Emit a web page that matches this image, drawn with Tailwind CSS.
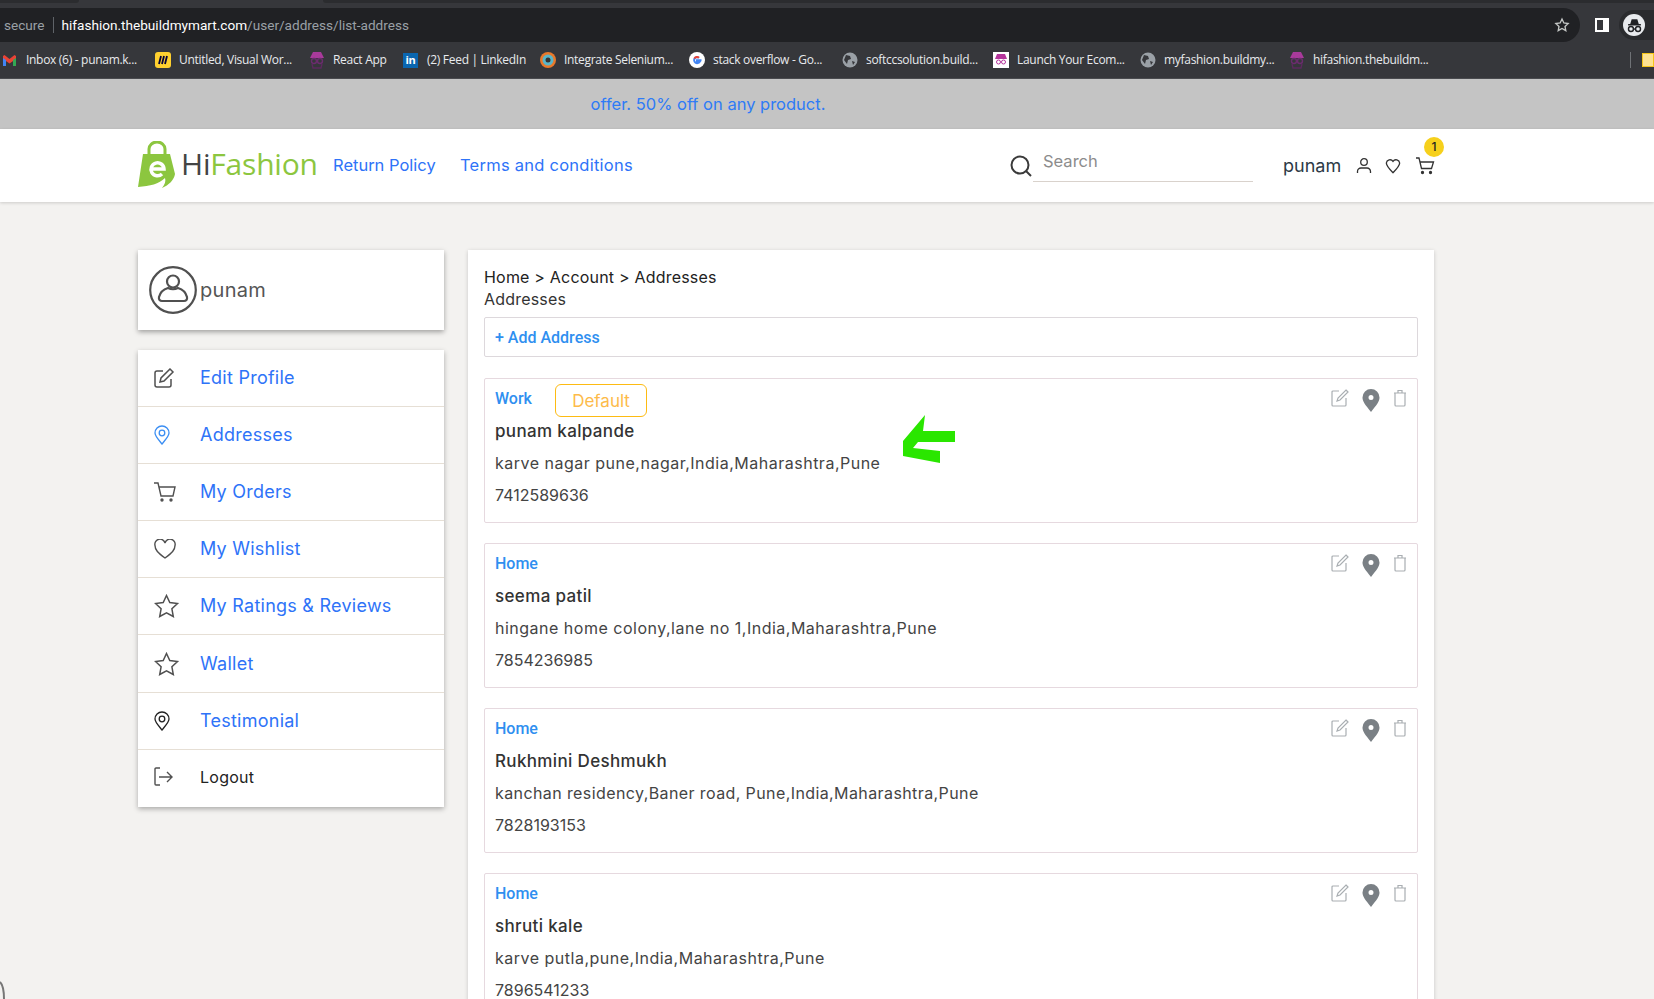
<!DOCTYPE html>
<html lang="en">
<head>
  <meta charset="UTF-8" />
  <title>HiFashion - Addresses</title>
  <script src="https://cdn.jsdelivr.net/npm/@tailwindcss/browser@4"></script>
</head>
<body class="bg-[#f3f2f0]">
<div class="relative h-[999px] w-[1654px] overflow-hidden font-['Inter',sans-serif]">

  <!-- browser chrome -->
  <div class="flex h-[8px] items-start bg-[#36373b]">
    <div class="h-[3px] w-[79px] rounded-br-[3px] bg-[#2b2c2f]"></div>
    <div class="h-[3px] w-[244px]"></div>
    <div class="h-[3px] flex-1 rounded-bl-[3px] bg-[#2b2c2f]"></div>
  </div>
  <div class="flex h-[34px] items-center bg-[#36373b] font-['Roboto',sans-serif] text-[13.600px]">
    <div class="flex h-[34px] w-[1580px] items-center rounded-r-[17px] bg-[#202124] pl-[4px]">
      <span class="text-[#9aa0a6]">secure</span>
      <span class="mx-[8px] h-[16px] w-px bg-[#5f6368]"></span>
      <span class="text-white">hifashion.thebuildmymart.com</span><span class="text-[#9aa0a6]">/user/address/list-address</span>
      <svg class="ml-auto mr-[10px]" width="16" height="16" viewBox="0 0 24 24" fill="none" stroke="#c4c7c5" stroke-width="2"><path d="M12 3l2.800 5.900 6.400.8-4.700 4.400 1.200 6.400-5.700-3.200-5.700 3.200 1.200-6.400L2.800 9.700l6.400-.8z"/></svg>
    </div>
    <div class="ml-[15px] h-[14px] w-[14px] border-2 border-r-[6px] border-white"></div>
    <div class="ml-[10px] flex h-[30px] flex-1 items-center rounded-l-[15px] bg-[#2a2b2e] pl-[4px]">
      <div class="flex h-[22px] w-[22px] items-center justify-center rounded-full bg-[#e8eaed]">
        <svg width="17" height="17" viewBox="0 0 24 24" fill="none" stroke="#202124" stroke-width="2"><path fill="#202124" stroke="none" d="M8 3h8l2 7H6zM3 10h18v2H3z"/><circle cx="7" cy="17" r="3.500"/><circle cx="17" cy="17" r="3.500"/><path d="M10.500 17h3"/></svg>
      </div>
    </div>
  </div>
  <div class="flex h-[37px] items-center border-b border-[#4a4b4f] bg-[#36373b] pl-[3px] font-['Open_Sans',sans-serif] text-[12px] tracking-[-0.3px] text-[#e8eaed]">
    <div class="flex w-[152px] items-center gap-[10px]">
      <svg width="13" height="11" viewBox="0 0 13 11"><path fill="#ea4335" d="M0 1l1.500-1 5 4 5-4 1.500 1v3l-6.500 4.500L0 4z"/><path fill="#4285f4" d="M0 3l3 2v6H0z"/><path fill="#34a853" d="M10 5l3-2v8h-3z"/></svg>
      <span>Inbox (6) - punam.k...</span>
    </div>
    <div class="flex w-[154px] items-center gap-[8px]">
      <svg width="16" height="16" viewBox="0 0 16 16"><rect width="16" height="16" rx="3" fill="#ffd02f"/><path d="M6 4l-2 8M9 4l-2 8M12 4l-2 8" stroke="#050038" stroke-width="1.800"/></svg>
      <span>Untitled, Visual Wor...</span>
    </div>
    <div class="flex w-[94px] items-center gap-[8px]">
      <svg width="16" height="18" viewBox="0 0 16 18"><path fill="#a93a9b" d="M4 1h8l3 6H1z"/><circle cx="5" cy="10" r="2.500" fill="none" stroke="#6b2c6e" stroke-width="1.400"/><circle cx="11" cy="10" r="2.500" fill="none" stroke="#6b2c6e" stroke-width="1.400"/><path fill="none" stroke="#5b2a5e" stroke-width="1.400" d="M3 13l1 4h8l1-4"/></svg>
      <span>React App</span>
    </div>
    <div class="flex w-[137px] items-center gap-[9px]">
      <div class="flex h-[15px] w-[15px] items-center justify-center bg-[#0a66b0] text-[11px] font-bold text-white">in</div>
      <span>(2) Feed | LinkedIn</span>
    </div>
    <div class="flex w-[149px] items-center gap-[8px]">
      <svg width="16" height="16" viewBox="0 0 16 16"><circle cx="8" cy="8" r="8" fill="#e8792b"/><circle cx="8" cy="8" r="5.500" fill="#59b5c8"/><circle cx="8" cy="8" r="2.500" fill="#333"/></svg>
      <span>Integrate Selenium...</span>
    </div>
    <div class="flex w-[153px] items-center gap-[8px]">
      <svg width="16" height="16" viewBox="0 0 16 16"><circle cx="8" cy="8" r="8" fill="#fff"/><path d="M12.500 8.200H8v1.500h2.700A3 3 0 1 1 10 5.800" fill="none" stroke="#4285f4" stroke-width="2"/><path d="M10 5.800a3 3 0 0 0-4.700.8" fill="none" stroke="#ea4335" stroke-width="2"/></svg>
      <span>stack overflow - Go...</span>
    </div>
    <div class="flex w-[151px] items-center gap-[8px]">
      <svg width="16" height="16" viewBox="0 0 16 16"><circle cx="8" cy="8" r="7.500" fill="#9aa0a6"/><path fill="#36373b" d="M4 3l4 1 1 3-3 1-1 4-3-4zM10 9l3 1-2 3z"/></svg>
      <span>softccsolution.build...</span>
    </div>
    <div class="flex w-[147px] items-center gap-[8px]">
      <svg width="16" height="16" viewBox="0 0 16 16"><rect width="16" height="16" fill="#fff"/><path fill="#b5359c" d="M4 2h8l2 5H2z"/><circle cx="5.500" cy="10" r="2" fill="none" stroke="#b5359c"/><circle cx="10.500" cy="10" r="2" fill="none" stroke="#b5359c"/></svg>
      <span>Launch Your Ecom...</span>
    </div>
    <div class="flex w-[149px] items-center gap-[8px]">
      <svg width="16" height="16" viewBox="0 0 16 16"><circle cx="8" cy="8" r="7.500" fill="#9aa0a6"/><path fill="#36373b" d="M4 3l4 1 1 3-3 1-1 4-3-4zM10 9l3 1-2 3z"/></svg>
      <span>myfashion.buildmy...</span>
    </div>
    <div class="flex w-[341px] items-center gap-[8px]">
      <svg width="16" height="18" viewBox="0 0 16 18"><path fill="#a93a9b" d="M4 1h8l3 6H1z"/><circle cx="5" cy="10" r="2.500" fill="none" stroke="#6b2c6e" stroke-width="1.400"/><circle cx="11" cy="10" r="2.500" fill="none" stroke="#6b2c6e" stroke-width="1.400"/><path fill="none" stroke="#5b2a5e" stroke-width="1.400" d="M3 13l1 4h8l1-4"/></svg>
      <span>hifashion.thebuildm...</span>
    </div>
    <div class="h-[16px] w-px bg-[#6f7276]"></div>
    <div class="ml-[11px] h-[14px] w-[12px] border border-[#f5c518] bg-[#fde293]"></div>
  </div>

  <!-- offer banner -->
  <div class="flex h-[50px] w-full items-center bg-[#c4c4c4]">
    <p class="w-[1416px] text-center text-[16.500px] text-[#2e7bf6]">offer. 50% off on any product.</p>
  </div>

  <!-- header -->
  <header class="relative flex h-[73px] items-center bg-white pl-[138px] shadow-[0_1px_3px_rgba(0,0,0,0.16)]">
    <div class="flex w-[195px] items-center">
      <svg width="38" height="48" viewBox="0 0 38 48" class="-mt-[2px]">
        <path d="M11 13V8a8 7 0 0 1 16 0v8" fill="none" stroke="#8cc63f" stroke-width="3"/>
        <path fill="#8cc63f" d="M5 13h27l5 20c-1 6-6 11-13 14 3-4 4-7 3-10-6 6-15 8-27 9z"/>
        <circle cx="20" cy="28" r="9.500" fill="#8cc63f"/>
        <path d="M13 28h13a6.500 6.500 0 1 0-2 5" fill="none" stroke="#fff" stroke-width="3.500"/>
      </svg>
      <span class="-mt-[4px] ml-[5px] font-['Open_Sans',sans-serif] text-[30px] leading-none tracking-[-0.2px] text-[#8cc63f]"><span class="text-[#444]">Hi</span>Fashion</span>
    </div>
    <a class="w-[127px] text-[16.500px] text-[#2e73f8]">Return Policy</a>
    <a class="w-[550px] text-[16.500px] tracking-[0.25px] text-[#2e73f8]">Terms and conditions</a>
    <svg width="22" height="22" viewBox="0 0 22 22" fill="none" stroke="#3a3a3a" stroke-width="2"><circle cx="10" cy="10" r="8.500"/><path d="M16 16l5 5"/></svg>
    <div class="ml-[1px] mt-[-7px] flex h-[40px] w-[220px] items-center border-b border-[#d9d2cc] pl-[10px] text-[16.500px] text-[#8c8c8c]">Search</div>
    <span class="ml-[30px] w-[73px] text-[18px] text-[#2d3a46]">punam</span>
    <svg width="16" height="18" viewBox="0 0 16 18" fill="none" stroke="#333" stroke-width="1.300"><circle cx="8" cy="5" r="3.300"/><path d="M1.500 16v-1.500a3.500 3.500 0 0 1 3.500-3.500h6a3.500 3.500 0 0 1 3.500 3.500V16"/></svg>
    <svg class="ml-[13px]" width="16" height="16" viewBox="0 0 24 24" fill="none" stroke="#333" stroke-width="2"><path d="M12 22C6 16 2 12 2 7.500A5.500 5.500 0 0 1 12 5a5.500 5.500 0 0 1 10 2.500C22 12 18 16 12 22z"/></svg>
    <svg class="ml-[14px]" width="20" height="18" viewBox="0 0 20 18" fill="none" stroke="#333" stroke-width="1.300"><path d="M1 1h3l2.500 10.500h10L18.500 5H5"/><circle cx="7.500" cy="15.500" r="1" fill="#333"/><circle cx="15.500" cy="15.500" r="1" fill="#333"/></svg>
    <div class="absolute left-[1424px] top-[8px] flex h-[20px] w-[20px] items-center justify-center rounded-full bg-[#f6d01c] text-[12px] font-medium text-[#222]">1</div>
  </header>

  <!-- page content -->
  <main class="flex items-start gap-[24px] pl-[138px] pt-[48px]">

    <!-- sidebar -->
    <aside class="flex w-[306px] flex-col gap-[20px]">
      <div class="flex h-[80px] items-center bg-white pl-[11px] shadow-[0_2px_5px_rgba(0,0,0,0.35)]">
        <svg width="48" height="48" viewBox="0 0 48 48" fill="none" stroke="#505050" stroke-width="2.200"><circle cx="24" cy="24" r="22.800"/><circle cx="24" cy="15.500" r="6"/><path d="M19 22c-5 1.500-8 5-9 9-.5 2.500 1 4 3 4h22c2 0 3.500-1.500 3-4-1-4-4-7.500-9-9-3 1.500-7 1.500-10 0z"/></svg>
        <span class="ml-[3px] text-[20px] tracking-[0.3px] text-[#555]">punam</span>
      </div>

      <nav class="bg-white text-[18px] tracking-[0.25px] text-[#2e73f8] shadow-[0_2px_5px_rgba(0,0,0,0.3)]">
        <a class="flex h-[57px] items-center border-b border-[#e6dfd5] pb-[1px] pl-[16px]">
          <svg class="w-[46px]" width="46" height="20" viewBox="0 0 46 20" fill="none" stroke="#505050" stroke-width="1.500"><path d="M9 3H3a2 2 0 0 0-2 2v12a2 2 0 0 0 2 2h12a2 2 0 0 0 2-2v-6"/><path d="M16 1l3 3-9 9-4 1 1-4z"/></svg>
          Edit Profile
        </a>
        <a class="flex h-[57px] items-center border-b border-[#e6dfd5] pb-[1px] pl-[16px]">
          <svg class="w-[46px]" width="46" height="20" viewBox="0 0 46 20" fill="none" stroke="#3b8ef3" stroke-width="1.300"><path d="M8 19C4 14 1 11 1 8a7 7 0 0 1 14 0c0 3-3 6-7 11z"/><circle cx="8" cy="8" r="2.800"/></svg>
          Addresses
        </a>
        <a class="flex h-[57px] items-center border-b border-[#e6dfd5] pb-[1px] pl-[16px]">
          <svg class="w-[46px]" width="46" height="20" viewBox="0 0 46 20" fill="none" stroke="#505050" stroke-width="1.400"><path d="M0 1h4l3 13h12l2-9H5"/><circle cx="8" cy="18" r="1" fill="#505050"/><circle cx="17" cy="18" r="1" fill="#505050"/></svg>
          My Orders
        </a>
        <a class="flex h-[57px] items-center border-b border-[#e6dfd5] pb-[1px] pl-[16px]">
          <svg class="w-[46px]" width="46" height="20" viewBox="0 0 46 20" fill="none" stroke="#505050" stroke-width="1.400"><path d="M11 19C4 14 1 11 1 6.500A5 5 0 0 1 11 4a5 5 0 0 1 10 2.500C21 11 18 14 11 19z"/></svg>
          My Wishlist
        </a>
        <a class="flex h-[57px] items-center border-b border-[#e6dfd5] pb-[1px] pl-[16px]">
          <svg class="w-[46px]" width="46" height="24" viewBox="0 0 46 24" fill="none" stroke="#505050" stroke-width="1.500"><path d="M12.500 1.500l3.300 7 7.700 1-5.600 5.300 1.400 7.700-6.800-3.700-6.800 3.700 1.400-7.700L1.500 9.500l7.700-1z"/></svg>
          My Ratings &amp; Reviews
        </a>
        <a class="flex h-[58px] items-center border-b border-[#e6dfd5] pl-[16px]">
          <svg class="w-[46px]" width="46" height="24" viewBox="0 0 46 24" fill="none" stroke="#505050" stroke-width="1.500"><path d="M12.500 1.500l3.300 7 7.700 1-5.600 5.300 1.400 7.700-6.800-3.700-6.800 3.700 1.400-7.700L1.500 9.500l7.700-1z"/></svg>
          Wallet
        </a>
        <a class="flex h-[57px] items-center border-b border-[#e6dfd5] pb-[1px] pl-[16px]">
          <svg class="w-[46px]" width="46" height="20" viewBox="0 0 46 20" fill="none" stroke="#222" stroke-width="1.300"><path d="M8 19C4 14 1 11 1 8a7 7 0 0 1 14 0c0 3-3 6-7 11z"/><circle cx="8" cy="8" r="2.800"/></svg>
          Testimonial
        </a>
        <a class="flex h-[57px] items-center pb-[3px] pl-[16px] text-[16px] text-[#222]">
          <svg class="w-[46px]" width="46" height="20" viewBox="0 0 46 20" fill="none" stroke="#505050" stroke-width="1.400"><path d="M6 1H2a1 1 0 0 0-1 1v15a1 1 0 0 0 1 1h4"/><path d="M5 10h13M13 5l5 5-5 5"/></svg>
          Logout
        </a>
      </nav>
    </aside>

    <!-- addresses -->
    <section class="w-[966px] bg-white px-[16px] pt-[16px] shadow-[0_1px_4px_rgba(0,0,0,0.18)]">
      <p class="h-[22px] text-[16px] leading-[22px] tracking-[0.2px] text-[#222]">Home &gt; Account &gt; Addresses</p>
      <h2 class="h-[22px] text-[16px] font-normal leading-[22px] tracking-[0.2px] text-[#333]">Addresses</h2>
      <div class="mt-[7px] flex h-[40px] items-center rounded-[2px] border border-[#ddd8dc] pl-[10px] pt-[2px] font-['Roboto',sans-serif] text-[16px] font-medium text-[#2f8ff0]">+ Add Address</div>

      <div class="mt-[21px] flex flex-col gap-[20px]">
        <article class="relative h-[145px] rounded-[2px] border border-[#e6d9df] px-[10px] pt-[6px] text-[16px] text-[#444]">
          <div class="flex h-[32px] items-start">
            <span class="flex h-[28px] w-[60px] items-center font-['Roboto',sans-serif] font-medium text-[#2f8ff0]">Work</span>
            <span class="-mt-[1px] flex h-[33px] w-[92px] items-center justify-center rounded-[6px] border border-[#fdbb13] pt-[2px] text-[17px] text-[#fdbb4a]">Default</span>
            <div class="ml-auto mt-[4px] flex items-start gap-[13px]">
              <svg width="18" height="18" viewBox="0 0 18 18" fill="none" stroke="#a9aeb2" stroke-width="1.200"><path d="M8 2H2a1 1 0 0 0-1 1v13a1 1 0 0 0 1 1h12a1 1 0 0 0 1-1V9"/><path d="M15 1l2 2-8 8-3 1 1-3z"/></svg>
              <svg width="18" height="23" viewBox="0 0 18 23"><path fill="#7a8085" fill-rule="evenodd" d="M9 23C3.500 16 .5 12.500.5 8.500a8.500 8.500 0 0 1 17 0C17.500 12.500 14.500 16 9 23zM9 11a2.500 2.500 0 1 0 0-5 2.500 2.500 0 0 0 0 5z"/></svg>
              <svg width="14" height="18" viewBox="0 0 14 18" fill="none" stroke="#a9aeb2" stroke-width="1.200"><path d="M1 4h12M2 4v12a1 1 0 0 0 1 1h8a1 1 0 0 0 1-1V4M5 4V1.500h4V4"/></svg>
            </div>
          </div>
          <p class="h-[28px] text-[17px] font-medium leading-[28px] tracking-[0.35px] text-[#333]">punam kalpande</p>
          <p class="mt-[2px] h-[32px] leading-[32px] tracking-[0.5px]">karve nagar pune,nagar,India,Maharashtra,Pune</p>
          <p class="h-[32px] leading-[32px]">7412589636</p>
          <svg class="absolute left-[418px] top-[36px]" width="53" height="49" viewBox="0 0 53 49"><path fill="#2ae600" d="M22 0L0 26v15l37 7V36L10 33l5-6h37V16H20z"/></svg>
        </article>

        <article class="h-[145px] rounded-[2px] border border-[#e6d9df] px-[10px] pt-[6px] text-[16px] text-[#444]">
          <div class="flex h-[32px] items-start">
            <span class="flex h-[28px] w-[60px] items-center font-['Roboto',sans-serif] font-medium text-[#2f8ff0]">Home</span>
            <div class="ml-auto mt-[4px] flex items-start gap-[13px]">
              <svg width="18" height="18" viewBox="0 0 18 18" fill="none" stroke="#a9aeb2" stroke-width="1.200"><path d="M8 2H2a1 1 0 0 0-1 1v13a1 1 0 0 0 1 1h12a1 1 0 0 0 1-1V9"/><path d="M15 1l2 2-8 8-3 1 1-3z"/></svg>
              <svg width="18" height="23" viewBox="0 0 18 23"><path fill="#7a8085" fill-rule="evenodd" d="M9 23C3.500 16 .5 12.500.5 8.500a8.500 8.500 0 0 1 17 0C17.500 12.500 14.500 16 9 23zM9 11a2.500 2.500 0 1 0 0-5 2.500 2.500 0 0 0 0 5z"/></svg>
              <svg width="14" height="18" viewBox="0 0 14 18" fill="none" stroke="#a9aeb2" stroke-width="1.200"><path d="M1 4h12M2 4v12a1 1 0 0 0 1 1h8a1 1 0 0 0 1-1V4M5 4V1.500h4V4"/></svg>
            </div>
          </div>
          <p class="h-[28px] text-[17px] font-medium leading-[28px] tracking-[0.35px] text-[#333]">seema patil</p>
          <p class="mt-[2px] h-[32px] leading-[32px] tracking-[0.5px]">hingane home colony,lane no 1,India,Maharashtra,Pune</p>
          <p class="h-[32px] leading-[32px]">7854236985</p>
        </article>

        <article class="h-[145px] rounded-[2px] border border-[#e6d9df] px-[10px] pt-[6px] text-[16px] text-[#444]">
          <div class="flex h-[32px] items-start">
            <span class="flex h-[28px] w-[60px] items-center font-['Roboto',sans-serif] font-medium text-[#2f8ff0]">Home</span>
            <div class="ml-auto mt-[4px] flex items-start gap-[13px]">
              <svg width="18" height="18" viewBox="0 0 18 18" fill="none" stroke="#a9aeb2" stroke-width="1.200"><path d="M8 2H2a1 1 0 0 0-1 1v13a1 1 0 0 0 1 1h12a1 1 0 0 0 1-1V9"/><path d="M15 1l2 2-8 8-3 1 1-3z"/></svg>
              <svg width="18" height="23" viewBox="0 0 18 23"><path fill="#7a8085" fill-rule="evenodd" d="M9 23C3.500 16 .5 12.500.5 8.500a8.500 8.500 0 0 1 17 0C17.500 12.500 14.500 16 9 23zM9 11a2.500 2.500 0 1 0 0-5 2.500 2.500 0 0 0 0 5z"/></svg>
              <svg width="14" height="18" viewBox="0 0 14 18" fill="none" stroke="#a9aeb2" stroke-width="1.200"><path d="M1 4h12M2 4v12a1 1 0 0 0 1 1h8a1 1 0 0 0 1-1V4M5 4V1.500h4V4"/></svg>
            </div>
          </div>
          <p class="h-[28px] text-[17px] font-medium leading-[28px] tracking-[0.35px] text-[#333]">Rukhmini Deshmukh</p>
          <p class="mt-[2px] h-[32px] leading-[32px] tracking-[0.4px]">kanchan residency,Baner road, Pune,India,Maharashtra,Pune</p>
          <p class="h-[32px] leading-[32px]">7828193153</p>
        </article>

        <article class="h-[145px] rounded-[2px] border border-[#e6d9df] px-[10px] pt-[6px] text-[16px] text-[#444]">
          <div class="flex h-[32px] items-start">
            <span class="flex h-[28px] w-[60px] items-center font-['Roboto',sans-serif] font-medium text-[#2f8ff0]">Home</span>
            <div class="ml-auto mt-[4px] flex items-start gap-[13px]">
              <svg width="18" height="18" viewBox="0 0 18 18" fill="none" stroke="#a9aeb2" stroke-width="1.200"><path d="M8 2H2a1 1 0 0 0-1 1v13a1 1 0 0 0 1 1h12a1 1 0 0 0 1-1V9"/><path d="M15 1l2 2-8 8-3 1 1-3z"/></svg>
              <svg width="18" height="23" viewBox="0 0 18 23"><path fill="#7a8085" fill-rule="evenodd" d="M9 23C3.500 16 .5 12.500.5 8.500a8.500 8.500 0 0 1 17 0C17.500 12.500 14.500 16 9 23zM9 11a2.500 2.500 0 1 0 0-5 2.500 2.500 0 0 0 0 5z"/></svg>
              <svg width="14" height="18" viewBox="0 0 14 18" fill="none" stroke="#a9aeb2" stroke-width="1.200"><path d="M1 4h12M2 4v12a1 1 0 0 0 1 1h8a1 1 0 0 0 1-1V4M5 4V1.500h4V4"/></svg>
            </div>
          </div>
          <p class="h-[28px] text-[17px] font-medium leading-[28px] tracking-[0.35px] text-[#333]">shruti kale</p>
          <p class="mt-[2px] h-[32px] leading-[32px] tracking-[0.5px]">karve putla,pune,India,Maharashtra,Pune</p>
          <p class="h-[32px] leading-[32px]">7896541233</p>
        </article>
      </div>
    </section>
  </main>

  <svg class="absolute bottom-0 left-0" width="8" height="18" viewBox="0 0 8 18" fill="none" stroke="#777" stroke-width="2"><path d="M0 1c3 3 4 10 4 17"/></svg>
</div>
</body>
</html>
